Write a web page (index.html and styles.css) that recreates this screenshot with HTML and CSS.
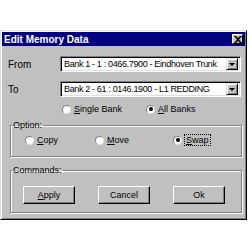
FILE: index.html
```html
<!DOCTYPE html>
<html lang="en">
<head>
  <meta charset="UTF-8" />
  <title>Edit Memory Data</title>
  <link rel="stylesheet" href="styles.css">
</head>
<body>
  <div class="window">
    <div class="titlebar">
      <span class="title">Edit Memory Data</span>
      <span class="close">
        <svg width="8" height="7" viewBox="0 0 8 7"><path d="M0 0h2l2 2 2-2h2L5 3.5 8 7H6L4 5 2 7H0l3-3.5z" fill="#000"/></svg>
      </span>
    </div>
    <div class="body">
      <div class="field">
        <label class="lbl">From</label>
        <div class="combo">
          <span class="value">Bank 1 - 1 : 0466.7900 - Eindhoven Trunk</span>
          <span class="arrow"><i></i></span>
        </div>
      </div>
      <div class="field">
        <label class="lbl">To</label>
        <div class="combo">
          <span class="value">Bank 2 - 61 : 0146.1900 - L1 REDDING</span>
          <span class="arrow"><i></i></span>
        </div>
      </div>
      <div class="radios">
        <span class="radio single"><b class="dot"></b><span><u>S</u>ingle Bank</span></span>
        <span class="radio"><b class="dot on"></b><span><u>A</u>ll Banks</span></span>
      </div>
      <fieldset class="group">
        <legend>Option:</legend>
        <div class="opts">
          <span class="radio copy"><b class="dot"></b><span><u>C</u>opy</span></span>
          <span class="radio move"><b class="dot"></b><span><u>M</u>ove</span></span>
          <span class="radio"><b class="dot on"></b><span class="focus"><u>S</u>wap</span></span>
        </div>
      </fieldset>
      <fieldset class="group cmds">
        <legend>Commands:</legend>
        <div class="buttons">
          <button class="btn"><u>A</u>pply</button>
          <button class="btn">Cancel</button>
          <button class="btn">Ok</button>
        </div>
      </fieldset>
    </div>
  </div>
</body>
</html>
```

FILE: styles.css
```css
body {
  margin: 0;
  background: #fff;
  font-family: "Liberation Sans", Arial, sans-serif;
  font-size: 9px;
  color: #000;
}
.window {
  margin-top: 30px;
  width: 247px;
  height: 190px;
  box-sizing: border-box;
  background: #c0c0c0;
  border-top: 1px solid #dfdfdf;
  border-left: 1px solid #dfdfdf;
  border-right: 1px solid #000;
  border-bottom: 1px solid #000;
  box-shadow: inset 1px 1px 0 #fff, inset -1px -1px 0 #808080;
  padding: 1px;
}
.titlebar {
  height: 14px;
  background: #000080;
  color: #fff;
  display: flex;
  align-items: center;
  justify-content: space-between;
  padding: 0 2px;
}
.title {
  font-weight: bold;
  font-size: 10px;
}
.close {
  width: 9px;
  height: 8px;
  background: #c0c0c0;
  border-top: 1px solid #fff;
  border-left: 1px solid #fff;
  border-right: 1px solid #000;
  border-bottom: 1px solid #000;
  display: flex;
  align-items: center;
  justify-content: center;
}
.body {
  padding: 10px 4px 0 6px;
}
.field {
  display: flex;
  align-items: center;
  margin-bottom: 9px;
}
.lbl {
  width: 52px;
  flex-shrink: 0;
  font-size: 10px;
}
.combo {
  flex: 1;
  min-width: 0;
  height: 16px;
  background: #fff;
  display: flex;
  align-items: center;
  box-sizing: border-box;
  border-top: 1px solid #808080;
  border-left: 1px solid #808080;
  border-right: 1px solid #fff;
  border-bottom: 1px solid #fff;
  box-shadow: inset 1px 1px 0 #000, inset -1px -1px 0 #dfdfdf;
  padding: 2px;
}
.value {
  flex: 1;
  min-width: 0;
  padding-left: 1px;
  letter-spacing: -0.35px;
  white-space: nowrap;
  overflow: hidden;
}
.arrow {
  width: 12px;
  height: 12px;
  flex-shrink: 0;
  box-sizing: border-box;
  background: #c0c0c0;
  border-top: 1px solid #dfdfdf;
  border-left: 1px solid #dfdfdf;
  border-right: 1px solid #000;
  border-bottom: 1px solid #000;
  box-shadow: inset 1px 1px 0 #fff, inset -1px -1px 0 #808080;
  display: flex;
  align-items: center;
  justify-content: center;
}
.arrow i {
  width: 0;
  height: 0;
  border-left: 3px solid transparent;
  border-right: 3px solid transparent;
  border-top: 3px solid #000;
}
.radios {
  display: flex;
  padding-left: 54px;
  margin: -2px 0 6px;
}
.radios .single {
  width: 84px;
}
.radio {
  display: flex;
  align-items: center;
  gap: 3px;
}
.dot {
  width: 9px;
  height: 9px;
  border-radius: 50%;
  background: #fff;
  box-sizing: border-box;
  border: 1px solid #808080;
  border-right-color: #dfdfdf;
  border-bottom-color: #dfdfdf;
  position: relative;
}
.dot.on::after {
  content: "";
  position: absolute;
  left: 1.5px;
  top: 1.5px;
  width: 4px;
  height: 4px;
  border-radius: 50%;
  background: #000;
}
.focus {
  outline: 1px dotted #000;
  padding: 0 1px;
}
.group {
  margin: 0 0 8px 2px;
  width: 232px;
  box-sizing: border-box;
  border: 1px solid #808080;
  box-shadow: 1px 1px 0 #fff, inset 1px 1px 0 #fff;
  padding: 0;
}
.group legend {
  padding: 0 1px;
  margin-left: 1px;
}
.opts {
  display: flex;
  padding: 5px 0 11px 14px;
}
.opts .copy {
  width: 70px;
}
.opts .move {
  width: 78px;
}
.cmds .buttons {
  display: flex;
  gap: 23px;
  padding: 11px 0 8px 12px;
}
.btn {
  width: 52px;
  height: 18px;
  font-family: "Liberation Sans", Arial, sans-serif;
  font-size: 9px;
  background: #c0c0c0;
  border-top: 1px solid #fff;
  border-left: 1px solid #fff;
  border-right: 1px solid #000;
  border-bottom: 1px solid #000;
  box-shadow: inset -1px -1px 0 #808080;
  padding: 0;
}
```
